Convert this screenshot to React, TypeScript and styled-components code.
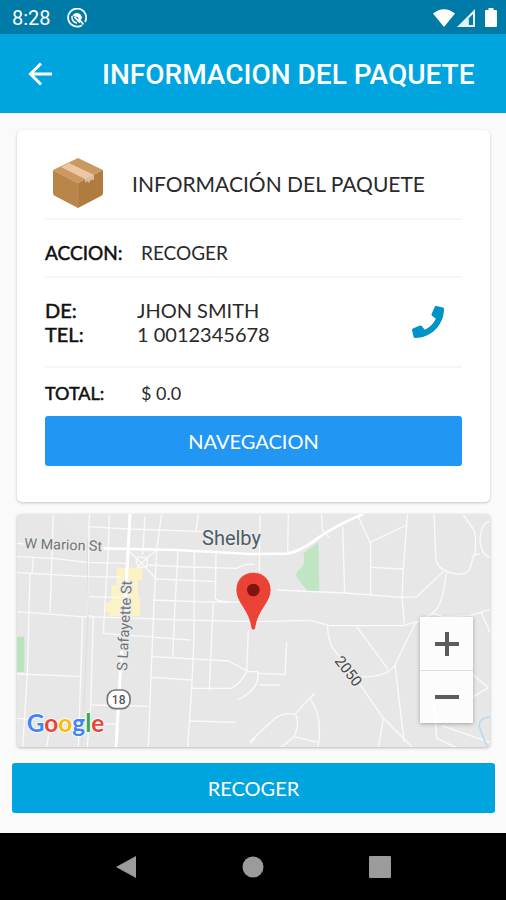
import React from "react";
import styled, { createGlobalStyle } from "styled-components";

const GlobalStyle = createGlobalStyle`
  * { box-sizing: border-box; }
  html, body, #root { height: 100%; }
  body { margin: 0; background: #fafafa; }
  button { font: inherit; border: 0; padding: 0; cursor: pointer; }
  svg { display: block; }
`;

const Screen = styled.div`
  display: flex;
  flex-direction: column;
  min-height: 100%;
  background: #fafafa;
  color: #2a2a2a;
  font-family: Lato, "Open Sans", sans-serif;
`;

const StatusBar = styled.div`
  display: flex;
  align-items: center;
  justify-content: space-between;
  height: 34px;
  padding: 2px 9px 0 12px;
  background: #007aa6;
  color: #fff;
  font: 400 20px/24px Roboto, sans-serif;
`;

const StatusGroup = styled.div<{ $gap: number }>`
  display: flex;
  align-items: center;
  gap: ${(p) => p.$gap}px;
`;

const AppBar = styled.header`
  display: flex;
  align-items: center;
  gap: 46px;
  height: 79px;
  padding: 0 24px;
  background: #00a5e0;
  color: #fff;
`;

const IconButton = styled.button`
  display: flex;
  align-items: center;
  justify-content: center;
  flex: none;
  width: 32px;
  height: 32px;
  background: transparent;
  color: inherit;
`;

const Title = styled.h1`
  margin: 0;
  padding-top: 2px;
  font: 500 28px/36px Roboto, sans-serif;
  white-space: nowrap;
`;

const Content = styled.main`
  flex: 1;
  display: flex;
  flex-direction: column;
  gap: 12px;
  padding: 17px 16px 16px 17px;
`;

const Card = styled.section`
  padding: 16px 28px 36px;
  border-radius: 5px;
  background: #fff;
  box-shadow: 0 1px 3px rgba(0, 0, 0, 0.22);
`;

const CardHead = styled.div`
  display: flex;
  align-items: center;
  gap: 27px;
  height: 74px;
  padding: 2px 0 0 6px;
  border-bottom: 2px solid #f7f7f7;
`;

const CardTitle = styled.h2`
  margin: 0;
  padding-top: 2px;
  font-size: 21px;
  line-height: 28px;
  font-weight: 400;
  white-space: nowrap;
`;

const Row = styled.div<{ $height: number; $line?: boolean }>`
  display: flex;
  align-items: center;
  justify-content: space-between;
  height: ${(p) => p.$height}px;
  border-bottom: ${(p) => (p.$line ? "2px solid #f7f7f7" : "0")};
`;

const Fields = styled.dl<{ $label: number; $size: number; $top?: number }>`
  display: grid;
  grid-template-columns: ${(p) => p.$label}px auto;
  margin: 0;
  padding-top: ${(p) => p.$top ?? 0}px;
  font-size: ${(p) => p.$size}px;
  line-height: 24px;
`;

const Label = styled.dt`
  color: #111;
  -webkit-text-stroke: 0.5px #111;
`;

const Value = styled.dd`
  margin: 0;
`;

const CallButton = styled(IconButton)`
  margin-right: 18px;
  color: #0093c8;
`;

const WideButton = styled.button<{ $color: string }>`
  display: block;
  width: 100%;
  height: 50px;
  border-radius: 3px;
  background: ${(p) => p.$color};
  color: #fff;
  font-size: 20px;
  line-height: 24px;
  text-align: center;
`;

const MapCard = styled.section`
  position: relative;
  overflow: hidden;
  border-radius: 4px;
  background: #e7e7e7;
  box-shadow: 0 1px 3px rgba(0, 0, 0, 0.26);
`;

const MapArt = styled.svg`
  width: 100%;
  height: auto;
`;

const ZoomControl = styled.div`
  position: absolute;
  right: 17px;
  bottom: 24px;
  width: 53px;
  background: rgba(255, 255, 255, 0.88);
  box-shadow: 0 1px 4px rgba(0, 0, 0, 0.3);
`;

const ZoomButton = styled.button`
  display: flex;
  align-items: center;
  justify-content: center;
  width: 100%;
  height: 53px;
  background: transparent;
  color: #5c5c5c;

  & + & { border-top: 1px solid #dedede; }
`;

const Footer = styled.footer`
  padding: 0 11px 20px 12px;
`;

const NavBar = styled.nav`
  display: flex;
  align-items: center;
  justify-content: center;
  gap: 95px;
  height: 67px;
  background: #000;
  color: #9b9b9b;
`;

const minorRoads = [
  "M130 27 L120 325",
  "M170 27 L232 100",
  "M238 27 L232 330 L250 335 L242 600 L232 726",
  "M298 27 L295 130 L280 385",
  "M405 35 L398 150",
  "M455 27 L440 135 L430 340 L415 726",
  "M565 27 L558 80",
  "M232 65 L355 72 L480 76 L620 82",
  "M21 115 L60 118",
  "M21 155 L130 160 L232 172 L350 175",
  "M70 160 L66 205",
  "M21 203 L235 215 L330 216",
  "M60 205 L52 510 L38 726",
  "M21 320 L215 335 L400 340 L520 345 L740 350",
  "M218 335 L205 726",
  "M21 507 L210 514",
  "M238 275 L330 278",
  "M280 385 L410 395 L540 405",
  "M245 600 L415 604",
  "M21 640 L60 643",
  "M255 655 L318 658",
  "M120 660 L110 726",
  "M352 135 L385 165 L440 222 L620 230",
  "M437 138 L410 160 L380 190",
  "M385 155 L412 160 L410 185 L388 188 L378 170 Z",
  "M410 180 L540 186 L680 190 Q705 175 735 178",
  "M504 135 L496 285 L488 455",
  "M553 140 L552 400 L545 550 L533 726",
  "M618 145 L616 280 Q620 290 660 292",
  "M430 285 L560 290 L690 292",
  "M610 290 L602 455 L598 555",
  "M428 455 L655 468 L710 497 Q695 535 662 550 L545 550",
  "M425 517 L545 525",
  "M540 648 L678 652",
  "M715 375 L710 500 L742 500 Q755 550 682 585",
  "M742 505 L825 508 L830 410",
  "M750 540 L810 540",
  "M750 30 L748 200",
  "M835 27 L833 140",
  "M935 27 L937 75 L960 100",
  "M998 65 L1004 265",
  "M1045 35 L1080 112 L1190 60 L1193 27",
  "M1082 112 L1082 270",
  "M1083 187 L1180 192 L1190 60",
  "M1180 192 L1176 275 L1183 355",
  "M800 255 L1005 264 L1176 277 L1220 275 L1300 200",
  "M1272 27 L1278 165 Q1288 200 1340 207 Q1382 210 1384 175 L1395 145 Q1400 100 1392 75 L1360 30",
  "M1440 50 Q1412 50 1410 110 Q1415 150 1440 158",
  "M1384 155 L1410 145",
  "M1308 205 Q1300 300 1268 325 L1215 355 L1155 480 Q1135 515 1055 516",
  "M740 350 L900 346 L960 362 L1180 362 L1220 350",
  "M952 362 Q955 420 980 445 L1055 545 L1120 640 L1208 728",
  "M1040 365 L1135 494",
  "M1155 480 L1182 710",
  "M1120 640 L1105 728",
  "M1268 325 L1300 335 L1380 332 L1440 314",
  "M1412 320 L1440 382",
  "M1390 510 L1435 548 L1390 575",
  "M720 710 L795 640 Q820 620 857 628 Q870 655 852 695 L812 728",
  "M857 625 L900 578 L915 565",
  "M900 580 Q940 635 924 728",
  "M852 695 L925 712",
  "M1270 560 L1280 700 L1340 728",
  "M1295 662 L1440 712",
  "M720 715 L735 700",
];

const googleLetters: [string, string][] = [
  ["G", "#4285f4"],
  ["o", "#ea4335"],
  ["o", "#fbbc05"],
  ["g", "#4285f4"],
  ["l", "#34a853"],
  ["e", "#ea4335"],
];

function CityMap() {
  return (
    <MapArt viewBox="21 27 1419 699" role="img" aria-label="Mapa de Shelby">
      <rect x="21" y="27" width="1419" height="699" fill="#e7e7e7" />
      <path d="M925 112 L928 258 L892 258 Q870 230 858 212 Q860 195 878 185 Q886 165 880 145 Z" fill="#c0e5c3" />
      <rect x="21" y="395" width="22" height="106" fill="#b9e4bf" />
      <path d="M320 188 H398 V225 H384 V280 H390 V334 H298 V322 H284 V300 L304 285 V240 H320 Z" fill="#fbf2c6" />
      <g fill="none" stroke="#fafafa" strokeWidth="4" strokeLinejoin="round">
        {minorRoads.map((d) => (
          <path key={d} d={d} />
        ))}
      </g>
      <path d="M170 27 L232 100 L234 330 L215 726" fill="none" stroke="#dcdddd" strokeWidth="3" />
      <g fill="none" stroke="#fff" strokeLinejoin="round">
        <path d="M280 130 L500 135 L720 147 L830 146 Q872 140 930 95 Q980 60 1060 27" strokeWidth="8" />
        <path d="M360 27 L352 180 L330 520 L318 726" strokeWidth="9" />
      </g>
      <path d="M1440 636 Q1405 640 1408 665 Q1420 700 1432 726" fill="none" stroke="#b7daf0" strokeWidth="5" />
      <g
        fontFamily="Roboto, sans-serif"
        stroke="#ebebeb"
        strokeWidth="8"
        strokeLinejoin="round"
        paintOrder="stroke"
      >
        <text x="576" y="119" fontSize="60" fill="#4f5b68">Shelby</text>
        <text transform="translate(43 130) rotate(2)" fontSize="43" fill="#717578">W Marion St</text>
        <text transform="translate(351 498) rotate(-87)" fontSize="44" fill="#717578">S Lafayette St</text>
        <text transform="translate(972 468) rotate(52)" fontSize="45" fill="#4a4a4a">2050</text>
      </g>
      <rect x="292" y="555" width="68" height="56" rx="24" fill="#fff" stroke="#757575" strokeWidth="5" />
      <text x="326" y="596" textAnchor="middle" fontFamily="Roboto, sans-serif" fontWeight="500" fontSize="36" fill="#555">18</text>
      <text
        x="50"
        y="682"
        fontFamily="Lato, sans-serif"
        fontWeight="700"
        fontSize="73"
        stroke="#fff"
        strokeWidth="5"
        strokeLinejoin="round"
        paintOrder="stroke"
      >
        {googleLetters.map(([letter, color], i) => (
          <tspan key={i} fill={color}>{letter}</tspan>
        ))}
      </text>
      <path
        d="M730 202 C698 202 678 226 678 255 C678 294 717 314 724 372 Q730 378 736 372 C743 314 783 294 783 255 C783 226 762 202 730 202 Z"
        fill="#ea4335"
        stroke="#fff"
        strokeOpacity="0.6"
        strokeWidth="3"
      />
      <circle cx="730" cy="255" r="19" fill="#811411" />
    </MapArt>
  );
}

function PackageIcon() {
  return (
    <svg width="54" height="54" viewBox="0 0 54 54" aria-hidden="true">
      <path d="M27 2 L52 14 L27 27 L2 14 Z" fill="#cb9862" />
      <path d="M2 14 L27 27 V52 L4 40 Q2 39 2 37 Z" fill="#b98549" />
      <path d="M52 14 L27 27 V52 L50 40 Q52 39 52 37 Z" fill="#ae7b41" />
      <path d="M10 11 L18 7 L43 19 V23 L36 25 L34 23 Z" fill="#edc6a6" />
      <path d="M34 23 L43 19 V24 L40 23 L38 27 L36 25 L34 27 Z" fill="#d9bca2" />
      <path d="M27 27 V52" fill="none" stroke="#c08b51" strokeWidth="1" />
    </svg>
  );
}

export default function App() {
  return (
    <Screen>
      <GlobalStyle />
      <StatusBar>
        <StatusGroup $gap={16}>
          <span>8:28</span>
          <svg width="20" height="20" viewBox="0 0 20 20" fill="none" stroke="#fff" aria-hidden="true">
            <path d="M15 17.200 A9 9 0 1 1 18 14" strokeWidth="1.800" />
            <path d="M5.500 8 Q6.500 5 10 5 Q14.500 5.500 15 10 L13.500 12 L10.500 9 Z" fill="#fff" stroke="none" />
            <path d="M5 8 Q4.500 14 10 15" strokeWidth="1.500" />
            <path d="M7.500 9 L13 14.500 M11.500 10.500 L16.500 16.500" strokeWidth="1.800" />
          </svg>
        </StatusGroup>
        <StatusGroup $gap={2}>
          <svg width="22" height="18" viewBox="0 0 22 18" fill="#fff" aria-hidden="true">
            <path d="M11 18 L0 4.500 Q11 -4 22 4.500 Z" />
          </svg>
          <svg width="18" height="18" viewBox="0 0 18 18" aria-hidden="true">
            <path d="M18 0 V18 H0 Z M16 5 L10 11 V16 H16 Z" fill="#fff" fillRule="evenodd" fillOpacity="0.9" />
            <path d="M11 10 V16" stroke="#fff" strokeOpacity="0.8" strokeWidth="2" />
          </svg>
          <svg width="20" height="20" viewBox="0 0 20 20" fill="#fff" aria-hidden="true">
            <path d="M11.500 0 H16.500 V2 H19 Q20 2 20 3 V18 Q20 19 19 19 H9 Q8 19 8 18 V3 Q8 2 9 2 H11.500 Z" />
          </svg>
        </StatusGroup>
      </StatusBar>

      <AppBar>
        <IconButton type="button" aria-label="Volver">
          <svg width="24" height="24" viewBox="0 0 24 24" fill="none" stroke="currentColor" strokeWidth="3" aria-hidden="true">
            <path d="M13 1.500 L2.500 12 L13 22.500 M2.500 12 H24" />
          </svg>
        </IconButton>
        <Title>INFORMACION DEL PAQUETE</Title>
      </AppBar>

      <Content>
        <Card>
          <CardHead>
            <PackageIcon />
            <CardTitle>INFORMACIÓN DEL PAQUETE</CardTitle>
          </CardHead>
          <Row $height={58} $line>
            <Fields $label={96} $size={19} $top={10}>
              <Label>ACCION:</Label>
              <Value>RECOGER</Value>
            </Fields>
          </Row>
          <Row $height={90} $line>
            <Fields $label={92} $size={20}>
              <Label>DE:</Label>
              <Value>JHON SMITH</Value>
              <Label>TEL:</Label>
              <Value>1 0012345678</Value>
            </Fields>
            <CallButton type="button" aria-label="Llamar">
              <svg width="34" height="34" viewBox="0 0 512 512" fill="currentColor" aria-hidden="true">
                <path d="M493.400 24.600l-104-24c-11.300-2.600-22.900 3.300-27.500 13.900l-48 112c-4.200 9.800-1.400 21.300 6.900 28l60.600 49.600c-36 76.700-98.900 140.500-177.200 177.200l-49.600-60.600c-6.800-8.300-18.200-11.100-28-6.900l-112 48C3.900 366.500-2 378.100.6 389.400l24 104C27.100 504.200 36.700 512 48 512c256.100 0 464-207.500 464-464 0-11.200-7.700-20.900-18.600-23.400z" />
              </svg>
            </CallButton>
          </Row>
          <Row $height={48}>
            <Fields $label={96} $size={18} $top={2}>
              <Label>TOTAL:</Label>
              <Value>$ 0.0</Value>
            </Fields>
          </Row>
          <WideButton type="button" $color="#2196f3">NAVEGACION</WideButton>
        </Card>

        <MapCard>
          <CityMap />
          <ZoomControl>
            <ZoomButton type="button" aria-label="Acercar">
              <svg width="24" height="24" viewBox="0 0 24 24" stroke="currentColor" strokeWidth="4" aria-hidden="true">
                <path d="M0 12 H24 M12 0 V24" />
              </svg>
            </ZoomButton>
            <ZoomButton type="button" aria-label="Alejar">
              <svg width="24" height="24" viewBox="0 0 24 24" stroke="currentColor" strokeWidth="4" aria-hidden="true">
                <path d="M0 12 H24" />
              </svg>
            </ZoomButton>
          </ZoomControl>
        </MapCard>
      </Content>

      <Footer>
        <WideButton type="button" $color="#00a5e0">RECOGER</WideButton>
      </Footer>

      <NavBar aria-label="Sistema">
        <IconButton type="button" aria-label="Atrás">
          <svg width="22" height="24" viewBox="0 0 22 24" fill="currentColor" aria-hidden="true">
            <path d="M21 1 V23 L1 12 Z" />
          </svg>
        </IconButton>
        <IconButton type="button" aria-label="Inicio">
          <svg width="22" height="22" viewBox="0 0 22 22" fill="currentColor" aria-hidden="true">
            <circle cx="11" cy="11" r="10.500" />
          </svg>
        </IconButton>
        <IconButton type="button" aria-label="Recientes">
          <svg width="22" height="22" viewBox="0 0 22 22" fill="currentColor" aria-hidden="true">
            <rect width="22" height="22" rx="1" />
          </svg>
        </IconButton>
      </NavBar>
    </Screen>
  );
}
